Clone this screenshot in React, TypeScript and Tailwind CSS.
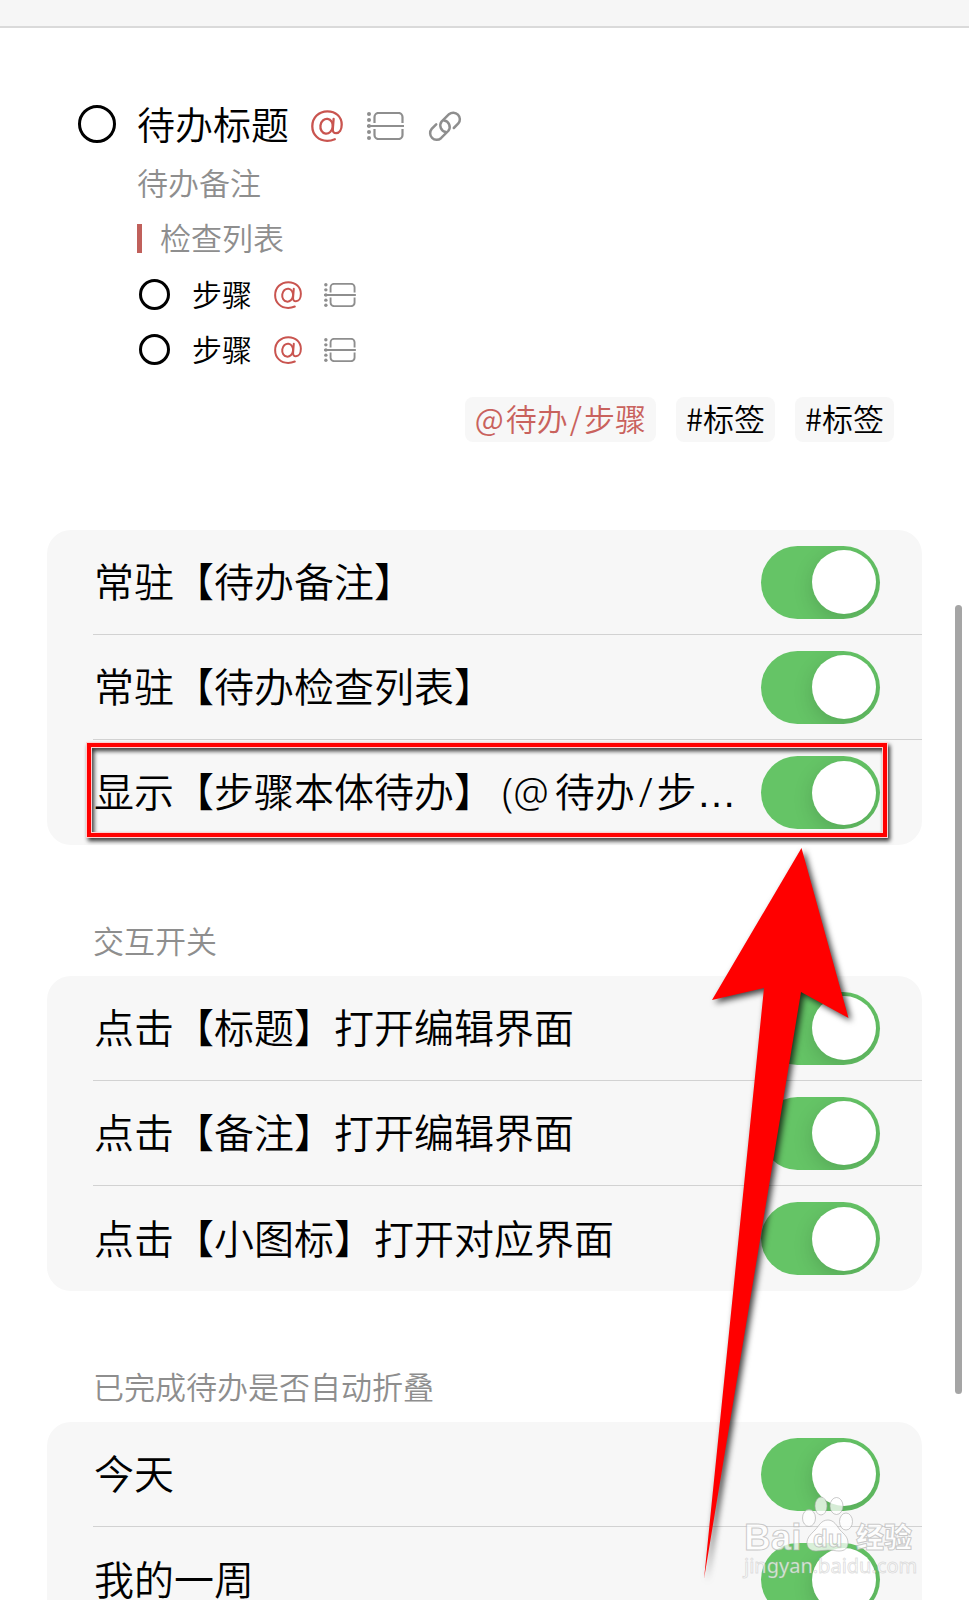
import { useState } from "react";

const groups = [
  {
    title: "",
    rows: [
      { id: "note", label: "常驻【待办备注】" },
      { id: "checklist", label: "常驻【待办检查列表】" },
      {
        id: "parent",
        label: (
          <>
            显示【步骤本体待办】<span className="ml-2">(</span>
            <span className="mr-1.5">@</span>待办<span className="mx-1">/</span>步
            <span className="font-['Liberation_Sans']">…</span>
          </>
        ),
        marked: true,
      },
    ],
  },
  {
    title: "交互开关",
    rows: [
      { id: "tap-title", label: "点击【标题】打开编辑界面" },
      { id: "tap-note", label: "点击【备注】打开编辑界面" },
      { id: "tap-icon", label: "点击【小图标】打开对应界面" },
    ],
  },
  {
    title: "已完成待办是否自动折叠",
    rows: [
      { id: "today", label: "今天" },
      { id: "week", label: "我的一周" },
    ],
  },
];

const AtIcon = ({ className }: { className: string }) => (
  <svg className={className} viewBox="0 0 32 32" fill="none" stroke="#c9544f" strokeWidth="2.3" strokeLinecap="round">
    <path d="M23.8 29.2C21.4 30.2 19 30.8 16.2 30.8 7.8 30.8 1.3 24.8 1.3 16.2 1.3 7.6 7.8 1.3 16.4 1.3c8.4 0 14.3 5.5 14.3 13.3 0 5.4-2.4 8.6-5.6 8.6-2.4 0-3.5-1.6-3.3-4L22.6 9" />
    <ellipse cx="15.6" cy="16.2" rx="6.2" ry="7.4" transform="rotate(8 15.6 16.2)" />
  </svg>
);

const StepsIcon = ({ className }: { className: string }) => (
  <svg className={className} viewBox="0 0 37 28" fill="none" stroke="#8e8e8e" strokeWidth="2.2">
    <path d="M0 14h37M7.5 11V5a4 4 0 0 1 4-4h20a4 4 0 0 1 4 4v6M7.5 17v6a4 4 0 0 0 4 4h20a4 4 0 0 0 4-4v-6" />
    <g fill="#8e8e8e" stroke="none">
      <circle cx="2" cy="2" r="2" />
      <circle cx="2" cy="8" r="2" />
      <circle cx="2" cy="14" r="2" />
      <circle cx="2" cy="20" r="2" />
      <circle cx="2" cy="26" r="2" />
    </g>
  </svg>
);

const LinkIcon = () => (
  <svg className="size-[34px]" viewBox="-1 -1 34 34" fill="none" stroke="#8e8e8e" strokeWidth="2.5" strokeLinecap="round">
    <path d="M24.8 18 29.3 13.5A6.6 6.6 0 0 0 20 4.2L12.6 11.6A6.6 6.6 0 0 0 16.8 22" />
    <path d="M7.2 14.4 2.7 18.9A6.6 6.6 0 0 0 12 28.2L19.4 20.8A6.6 6.6 0 0 0 15.2 10.4" />
  </svg>
);

const Step = ({ id }: { id: string }) => (
  <li className="flex h-[55px] items-center">
    <input
      id={id}
      type="checkbox"
      className="ml-0.5 size-[31px] appearance-none rounded-full border-[3px] border-black checked:bg-black"
    />
    <label htmlFor={id} className="ml-[22px] text-[30px]">
      步骤
    </label>
    <AtIcon className="ml-[22px] size-7" />
    <StepsIcon className="ml-[22px] h-6 w-8" />
  </li>
);

const Preview = () => (
  <section className="px-[75px] pt-16">
    <div className="flex h-16 items-center pl-[3px]">
      <input
        id="todo"
        type="checkbox"
        className="size-[38px] appearance-none rounded-full border-[3px] border-black checked:bg-black"
      />
      <label htmlFor="todo" className="ml-[21px] text-[38px]">
        待办标题
      </label>
      <div className="ml-[22px] flex items-center gap-6 pt-1">
        <AtIcon className="size-8" />
        <StepsIcon className="h-7 w-[37px]" />
        <LinkIcon />
      </div>
    </div>
    <div className="pl-[62px]">
      <p className="flex h-[55px] items-center text-[31px] text-[#8e8e8e]">待办备注</p>
      <p className="flex h-[55px] items-center gap-[18px] text-[31px] text-[#8e8e8e]">
        <span className="h-[29px] w-[5px] bg-[#c0605b]" />
        检查列表
      </p>
      <ul className="pt-px">
        <Step id="step-1" />
        <Step id="step-2" />
      </ul>
    </div>
    <div className="mt-5 flex justify-end gap-5 font-['Noto_Sans_CJK_SC',sans-serif] text-[31px] leading-[41px]">
      <span className="rounded-lg bg-[#f7f7f7] px-2.5 pb-1 text-[#c9625d]">
        @<span className="ml-0.5">待办</span>
        <span className="mx-0.5">/</span>步骤
      </span>
      <span className="rounded-lg bg-[#f7f7f7] px-2.5 pb-1">#标签</span>
      <span className="rounded-lg bg-[#f7f7f7] px-2.5 pb-1">#标签</span>
    </div>
  </section>
);

const Toggle = ({ id }: { id: string }) => {
  const [on, setOn] = useState(true);

  return (
    <input
      id={id}
      type="checkbox"
      role="switch"
      checked={on}
      onChange={() => setOn(!on)}
      className="flex h-[73px] w-[119px] shrink-0 cursor-pointer appearance-none items-center overflow-hidden rounded-full bg-[#d9d9d9] px-1 before:size-16 before:rounded-full before:bg-white before:shadow-[0_6px_20px_rgba(0,0,0,0.15)] checked:justify-end checked:bg-[#65c466]"
    />
  );
};

export default function App() {
  return (
    <div className="relative h-screen overflow-hidden bg-white font-['Noto_Sans','Noto_Sans_CJK_SC',sans-serif] font-[350] text-black">
      <header className="h-7 border-b-2 border-[#dadada] bg-[#f6f6f6]" />

      <Preview />

      <main className="mt-[88px] px-[47px]">
        {groups.map((group) => (
          <section key={group.rows[0].id}>
            {group.title && (
              <h2 className="mt-[73px] mb-3 pl-[46px] text-[31px] leading-[46px] font-[350] text-[#8e8e8e]">
                {group.title}
              </h2>
            )}
            <ul className="rounded-3xl bg-[#f7f7f7] pl-[46px]">
              {group.rows.map((row) => (
                <li
                  key={row.id}
                  className="relative flex h-[105px] items-center justify-between border-b border-[#d2d2d2] pr-[42px] last:border-b-0"
                >
                  <label htmlFor={row.id} className="pl-px text-[40px] whitespace-nowrap">
                    {row.label}
                  </label>
                  <Toggle id={row.id} />
                  {"marked" in row && (
                    <div className="pointer-events-none absolute top-0.5 right-[34px] bottom-[7px] -left-[7px] border border-[#ffd0d0] drop-shadow-[2px_3px_2px_rgba(0,0,0,0.8)]">
                      <div className="h-full border-4 border-[#ff0000]">
                        <div className="h-full border border-[#ffd0d0]" />
                      </div>
                    </div>
                  )}
                </li>
              ))}
            </ul>
          </section>
        ))}
      </main>

      {/* scroll thumb */}
      <div className="absolute top-[605px] right-[7px] h-[789px] w-[7px] rounded-full bg-[#a5a5a5]" />

      {/* pointer to the marked row */}
      <svg
        className="pointer-events-none absolute top-[840px] right-[109px] h-[750px] w-[160px] drop-shadow-[3px_3px_3px_rgba(0,0,0,0.75)]"
        viewBox="700 840 160 750"
      >
        <path d="M801.5 848 848.5 1018 801 992 704 1579 764 988 712 1000Z" fill="#ff0000" />
      </svg>

      {/* watermark */}
      <svg
        className="pointer-events-none absolute top-[1490px] right-[49px] h-[100px] w-[180px]"
        viewBox="740 1490 180 100"
        fill="#ffffff"
        fillOpacity="0.75"
        stroke="#a8a8a8"
        strokeOpacity="0.6"
        strokeWidth="1"
      >
        <ellipse cx="809" cy="1518" rx="6.5" ry="8.5" />
        <ellipse cx="821" cy="1506" rx="6" ry="9" />
        <ellipse cx="836.5" cy="1506" rx="6.5" ry="8.5" />
        <ellipse cx="846" cy="1521.5" rx="6.5" ry="8.5" />
        <path d="M828 1520c-7 0-9 6-13 10-5 5-8 8-8 13 0 5 4 8 9 8 4 0 8-1 12-1s8 1 11 1c6 0 9-3 9-8 0-6-4-9-8-13-3-4-6-10-12-10Z" />
        <text x="744" y="1550" fontSize="37" fontWeight="700" fontFamily="Liberation Sans, sans-serif">
          Bai
        </text>
        <text x="813" y="1547" fontSize="24" fontWeight="700" fontFamily="Liberation Sans, sans-serif">
          du
        </text>
        <text x="856" y="1548" fontSize="28" fontWeight="900" fontFamily="Noto Sans CJK SC, sans-serif">
          经验
        </text>
        <text x="744" y="1573" fontSize="20" fontWeight="400" fontFamily="Noto Sans, sans-serif" strokeOpacity="0.35">
          jingyan.baidu.com
        </text>
      </svg>
    </div>
  );
}
